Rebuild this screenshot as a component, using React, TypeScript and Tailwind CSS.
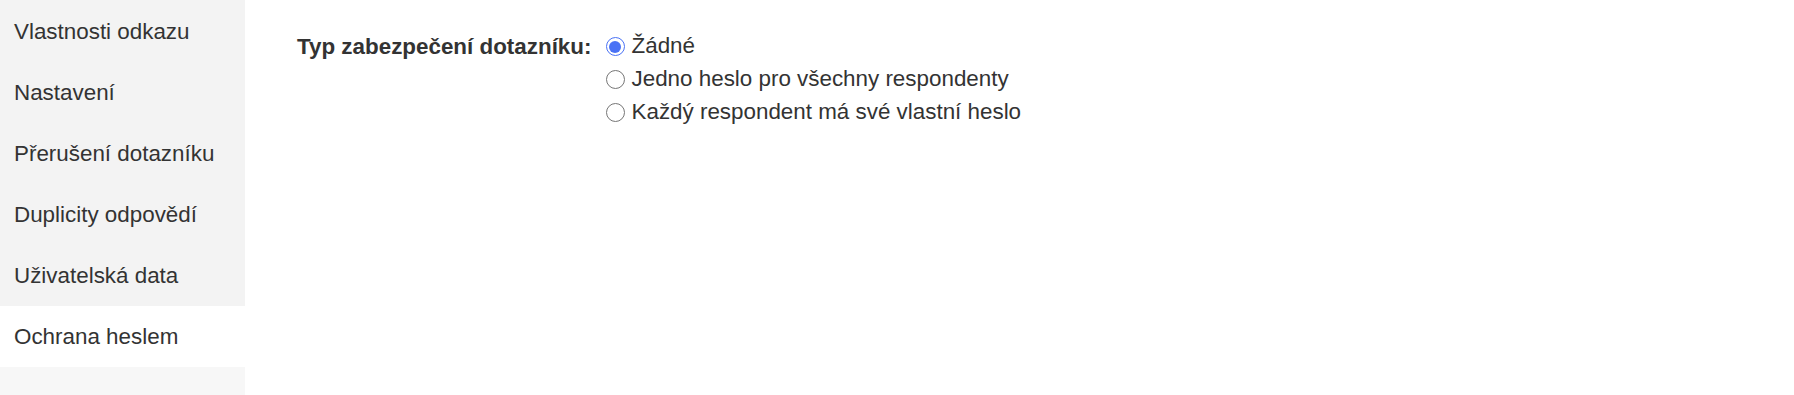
import React from "react";

const items = [
  "Vlastnosti odkazu",
  "Nastavení",
  "Přerušení dotazníku",
  "Duplicity odpovědí",
  "Uživatelská data",
  "Ochrana heslem",
];

const options = [
  "Žádné",
  "Jedno heslo pro všechny respondenty",
  "Každý respondent má své vlastní heslo",
];

function Radio({ checked }: { checked: boolean }) {
  return checked ? (
    <span className="flex h-[19px] w-[19px] shrink-0 items-center justify-center rounded-full border-[1.5px] border-[#4a72f5] bg-white">
      <span className="h-[12px] w-[12px] rounded-full bg-[#4a72f5]" />
    </span>
  ) : (
    <span className="h-[19px] w-[19px] shrink-0 rounded-full border-[1.4px] border-[#767676] bg-white" />
  );
}

export default function App() {
  return (
    <div
      className="flex min-h-[395px] w-full bg-white text-[22.4px] text-[#333]"
      style={{ fontFamily: '"Liberation Sans", Arial, sans-serif' }}
    >
      <aside className="flex w-[245px] shrink-0 flex-col bg-[#f7f7f7]">
        <div className="h-[1px] bg-[#f3f3f3]" />
        {items.map((it, i) => (
          <div
            key={it}
            className={
              i === 5
                ? "flex h-[61px] items-center bg-white pl-[14px]"
                : "flex h-[61px] items-center bg-[#f3f3f3] pl-[14px]"
            }
          >
            {it}
          </div>
        ))}
      </aside>
      <main className="flex flex-1 items-start pl-[52px] pt-[30px]">
        <div className="flex h-[33px] w-[308.5px] shrink-0 items-center whitespace-nowrap font-bold">
          Typ zabezpečení dotazníku:
        </div>
        <div className="flex flex-col">
          {options.map((o, i) => (
            <label key={o} className="flex h-[33px] items-center gap-[7px] whitespace-nowrap">
              <Radio checked={i === 0} />
              <span className="leading-none">{o}</span>
            </label>
          ))}
        </div>
      </main>
    </div>
  );
}
